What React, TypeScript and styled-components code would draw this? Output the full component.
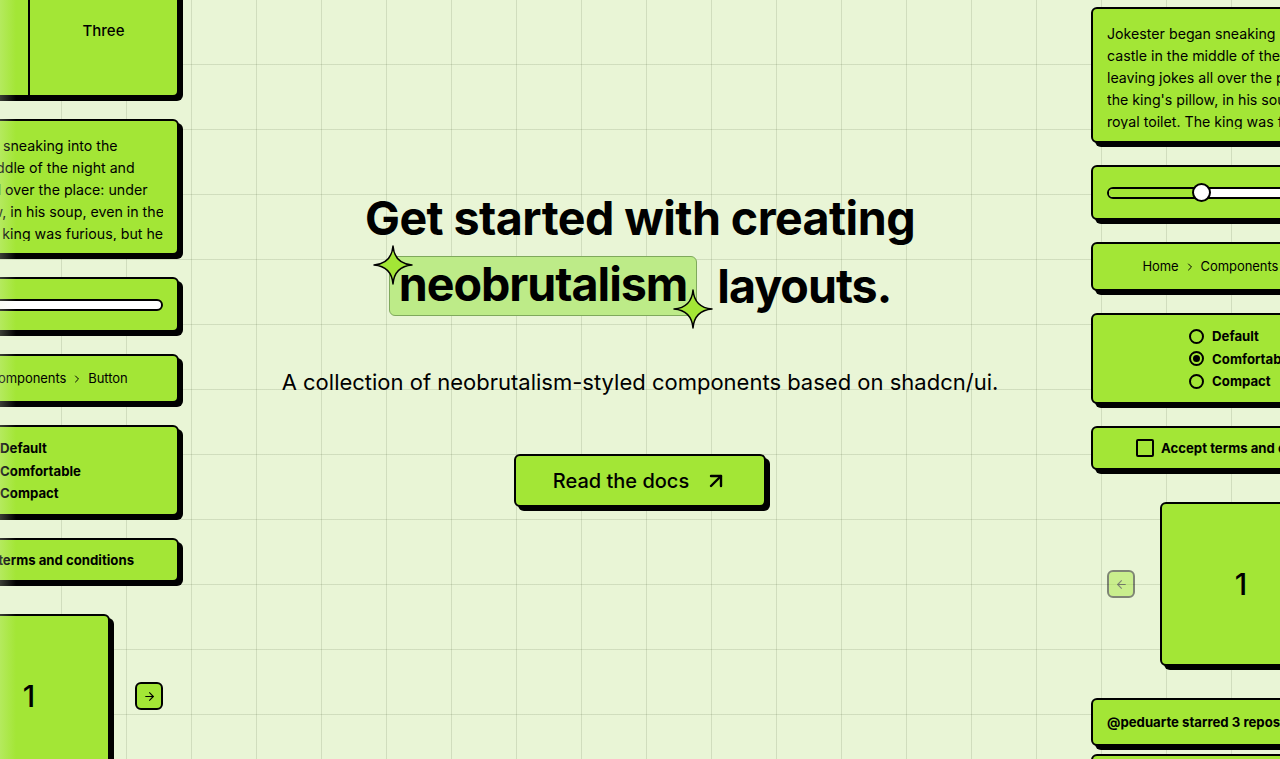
import React from "react";
import styled, { createGlobalStyle } from "styled-components";
import { ArrowUpRight, ArrowLeft, ArrowRight, ChevronRight, ChevronsUpDown } from "lucide-react";

const MAIN = "#a3e636";
const BG = "#e9f5d6";

const Global = createGlobalStyle`
  html, body { margin: 0; padding: 0; }
  body {
    font-family: Inter, "Noto Sans", sans-serif;
    background: ${BG};
    color: #000;
    overflow: hidden;
  }
  * { box-sizing: border-box; }
`;

const Page = styled.div`
  position: relative;
  width: 1280px;
  height: 759px;
  overflow: hidden;
  background-color: ${BG};
  background-image:
    linear-gradient(to right, rgba(60, 80, 40, 0.14) 1px, transparent 1px),
    linear-gradient(to bottom, rgba(60, 80, 40, 0.14) 1px, transparent 1px);
  background-size: 65px 65px;
  background-position: 61px 64px;
`;

const EdgeFade = styled.div`
  position: absolute;
  left: 0;
  top: 0;
  bottom: 0;
  width: 16px;
  background: linear-gradient(to right, rgba(233, 245, 214, 0.25), rgba(233, 245, 214, 0));
  pointer-events: none;
`;

const Stage = styled.div`
  display: grid;
  grid-template-columns: 300px 1fr 300px;
  width: 1512px;
  margin-left: -121px;
  height: 100%;
`;

const Column = styled.div<{ $offset: number }>`
  display: flex;
  flex-direction: column;
  gap: 22px;
  margin-top: ${(p) => p.$offset}px;
`;

const Card = styled.div`
  background: ${MAIN};
  border: 2px solid #000;
  border-radius: 6px;
  box-shadow: 4px 4px 0 0 #000;
  flex-shrink: 0;
`;

/* Resizable */
const ResizableCard = styled(Card)`
  height: 200px;
  display: flex;
  overflow: hidden;
`;

const Panel = styled.div<{ $grow: number }>`
  flex: ${(p) => p.$grow};
  display: flex;
  align-items: center;
  justify-content: center;
  font-size: 15px;
  font-weight: 500;
`;

const PanelStack = styled.div`
  flex: 1;
  display: flex;
  flex-direction: column;
`;

const VDivider = styled.div`
  width: 2px;
  background: #000;
`;

const HDivider = styled.div`
  height: 2px;
  background: #000;
`;

/* Text */
const TextCard = styled(Card)`
  padding: 14px 14px 12px;
`;

const TextClip = styled.div`
  height: 106px;
  overflow: hidden;
  font-size: 14.2px;
  line-height: 22px;
`;

const Line = styled.span`
  display: block;
  white-space: nowrap;
`;

/* Slider */
const SliderCard = styled(Card)`
  padding: 16px 14px;
`;

const Track = styled.div`
  position: relative;
  height: 19px;
  display: flex;
  align-items: center;
`;

const Rail = styled.div`
  flex: 1;
  height: 12px;
  border: 2px solid #000;
  border-radius: 999px;
  background: #fff;
  overflow: hidden;
`;

const Range = styled.div`
  height: 100%;
  background: ${MAIN};
`;

const Thumb = styled.div`
  position: absolute;
  top: 0;
  width: 19px;
  height: 19px;
  margin-left: -9px;
  border: 2px solid #000;
  border-radius: 50%;
  background: #fff;
`;

/* Breadcrumb */
const CenterCard = styled(Card)<{ $py: number }>`
  padding: ${(p) => p.$py}px 14px;
  display: flex;
  justify-content: center;
`;

const Crumbs = styled.div`
  display: flex;
  align-items: center;
  gap: 5px;
  font-size: 13px;
  line-height: 21px;
  letter-spacing: -0.005em;
  white-space: nowrap;
`;

/* Radio */
const RadioList = styled.div`
  display: flex;
  flex-direction: column;
  gap: 6.5px;
`;

const RadioRow = styled.div`
  display: flex;
  align-items: center;
  gap: 8px;
  height: 16px;
  font-size: 13.2px;
  font-weight: 700;
  white-space: nowrap;
`;

const RadioDot = styled.span<{ $checked?: boolean }>`
  width: 15px;
  height: 15px;
  border: 2px solid #000;
  border-radius: 50%;
  display: flex;
  align-items: center;
  justify-content: center;
  &::after {
    content: "";
    width: 7px;
    height: 7px;
    border-radius: 50%;
    background: ${(p) => (p.$checked ? "#000" : "transparent")};
  }
`;

/* Checkbox */
const CheckRow = styled.div`
  display: flex;
  align-items: center;
  gap: 7px;
  font-size: 13.2px;
  font-weight: 700;
  white-space: nowrap;
`;

const Box = styled.span`
  width: 18px;
  height: 18px;
  border: 2px solid #000;
  border-radius: 2px;
`;

/* Carousel */
const Carousel = styled.div`
  padding: 10px 0;
  display: flex;
  align-items: center;
  justify-content: center;
  gap: 25px;
`;

const Slide = styled(Card)`
  width: 162px;
  height: 164px;
  display: flex;
  align-items: center;
  justify-content: center;
  font-size: 30px;
  font-weight: 500;
`;

const NavButton = styled.button<{ $disabled?: boolean }>`
  width: 28px;
  height: 28px;
  padding: 0;
  border: 2px solid #000;
  border-radius: 6px;
  background: ${MAIN};
  display: flex;
  align-items: center;
  justify-content: center;
  color: #000;
  opacity: ${(p) => (p.$disabled ? 0.45 : 1)};
`;

/* Collapsible */
const CollapsibleGroup = styled.div`
  display: flex;
  flex-direction: column;
  gap: 8px;
`;

const RowCard = styled(Card)`
  height: 48px;
  padding: 0 14px;
  display: flex;
  align-items: center;
  justify-content: space-between;
  font-size: 13.2px;
  font-weight: 700;
  white-space: nowrap;
`;

const MonoText = styled.span`
  font-family: "DejaVu Sans Mono", monospace;
  font-size: 13px;
  font-weight: 400;
`;

/* Hero */
const Hero = styled.main`
  display: flex;
  flex-direction: column;
  align-items: center;
  padding-top: 184px;
  padding-left: 10px;
`;

const Title = styled.h1`
  margin: 0;
  font-size: 46.6px;
  line-height: 68px;
  font-weight: 700;
  letter-spacing: -0.012em;
  text-align: center;
`;

const TitleLine = styled.span<{ $gap?: number; $tight?: boolean }>`
  display: flex;
  justify-content: center;
  align-items: center;
  gap: ${(p) => p.$gap ?? 0}px;
  white-space: nowrap;
  letter-spacing: ${(p) => (p.$tight ? "-0.022em" : "inherit")};
`;

const Highlight = styled.span`
  position: relative;
  display: inline-flex;
  align-items: center;
  height: 60px;
  padding: 0 9px 4px;
  background: #bdeb88;
  border: 1.5px solid #7fa95c;
  border-radius: 6px;
`;

const StarWrap = styled.span<{ $pos: "tl" | "br" }>`
  position: absolute;
  width: 40px;
  height: 40px;
  display: block;
  line-height: 0;
  ${(p) => (p.$pos === "tl" ? "left: -17px; top: -12px;" : "right: -17px; bottom: -14px;")}
`;

const Subtitle = styled.p`
  margin: 46px 0 0;
  font-size: 22px;
  line-height: 32px;
  white-space: nowrap;
`;

const DocsButton = styled.a`
  margin-top: 56px;
  height: 53px;
  padding: 0 36px 0 37px;
  display: inline-flex;
  align-items: center;
  gap: 15px;
  background: ${MAIN};
  border: 2px solid #000;
  border-radius: 6px;
  box-shadow: 4px 4px 0 0 #000;
  font-size: 20px;
  font-weight: 500;
  color: #000;
  text-decoration: none;
`;

const Star = ({ pos }: { pos: "tl" | "br" }) => (
  <StarWrap $pos={pos}>
    <svg width="40" height="40" viewBox="0 0 40 40">
      <path
        d="M20 1 C21 13 27 19 39 20 C27 21 21 27 20 39 C19 27 13 21 1 20 C13 19 19 13 20 1 Z"
        fill={MAIN}
        stroke="#000"
        strokeWidth="1.5"
        strokeLinejoin="round"
      />
    </svg>
  </StarWrap>
);

const story = [
  "Jokester began sneaking into the",
  "castle in the middle of the night and",
  "leaving jokes all over the place: under",
  "the king's pillow, in his soup, even in the",
  "royal toilet. The king was furious, but he",
  "couldn't seem to stop Jokester.",
];

const ComponentList = () => (
  <>
    <TextCard>
      <TextClip>
        {story.map((l) => (
          <Line key={l}>{l}</Line>
        ))}
      </TextClip>
    </TextCard>
    <SliderCard>
      <Track>
        <Rail>
          <Range style={{ width: "35%" }} />
        </Rail>
        <Thumb style={{ left: "35%" }} />
      </Track>
    </SliderCard>
    <CenterCard $py={12}>
      <Crumbs>
        <span>Home</span>
        <ChevronRight size={12} strokeWidth={2} />
        <span>Components</span>
        <ChevronRight size={12} strokeWidth={2} />
        <span>Button</span>
      </Crumbs>
    </CenterCard>
    <CenterCard $py={13}>
      <RadioList>
        <RadioRow>
          <RadioDot />
          Default
        </RadioRow>
        <RadioRow>
          <RadioDot $checked />
          Comfortable
        </RadioRow>
        <RadioRow>
          <RadioDot />
          Compact
        </RadioRow>
      </RadioList>
    </CenterCard>
    <CenterCard $py={11}>
      <CheckRow>
        <Box />
        Accept terms and conditions
      </CheckRow>
    </CenterCard>
    <Carousel>
      <NavButton $disabled aria-label="Previous slide">
        <ArrowLeft size={13} strokeWidth={2} />
      </NavButton>
      <Slide>1</Slide>
      <NavButton aria-label="Next slide">
        <ArrowRight size={13} strokeWidth={2} />
      </NavButton>
    </Carousel>
    <CollapsibleGroup>
      <RowCard>
        @peduarte starred 3 repositories
        <ChevronsUpDown size={16} />
      </RowCard>
      <RowCard>
        <MonoText>@radix-ui/primitives</MonoText>
      </RowCard>
    </CollapsibleGroup>
  </>
);

export default function App() {
  return (
    <>
      <Global />
      <Page>
        <Stage>
          <Column $offset={-103}>
            <ResizableCard>
              <Panel $grow={1}>One</Panel>
              <VDivider />
              <PanelStack>
                <Panel $grow={1}>Two</Panel>
                <HDivider />
                <Panel $grow={2}>Three</Panel>
              </PanelStack>
            </ResizableCard>
            <ComponentList />
          </Column>
          <Hero>
            <Title>
              <TitleLine>Get started with creating</TitleLine>
              <TitleLine $gap={20} $tight>
                <Highlight>
                  <Star pos="tl" />
                  neobrutalism
                  <Star pos="br" />
                </Highlight>
                layouts.
              </TitleLine>
            </Title>
            <Subtitle>A collection of neobrutalism-styled components based on shadcn/ui.</Subtitle>
            <DocsButton href="#">
              Read the docs
              <ArrowUpRight size={24} strokeWidth={2.4} />
            </DocsButton>
          </Hero>
          <Column $offset={7}>
            <ComponentList />
          </Column>
        </Stage>
        <EdgeFade />
      </Page>
    </>
  );
}
